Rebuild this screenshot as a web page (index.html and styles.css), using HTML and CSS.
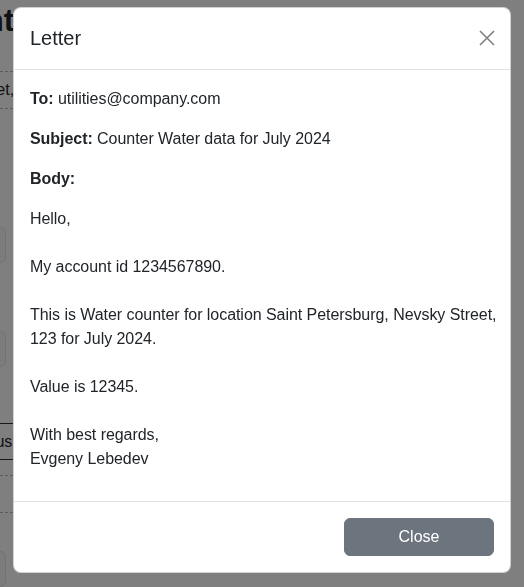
FILE: index.html
```html
<!DOCTYPE html>
<html lang="en">
<head>
<meta charset="utf-8">
<title>Letter</title>
<link rel="stylesheet" href="styles.css">
</head>
<body>
<div class="page">
  <h1 class="page-title">Counters</h1>
  <div class="row-dashed"><span class="cell-text">Street,</span></div>
  <div class="gap-a"></div>
  <div class="ghost-box"></div>
  <div class="gap-b"></div>
  <div class="ghost-box"></div>
  <div class="gap-c"></div>
  <div class="ghost-input"><span class="cell-text">Status</span></div>
  <div class="row-dashed short"></div>
  <div class="gap-d"></div>
  <div class="ghost-box"></div>
</div>

<div class="backdrop"></div>

<div class="modal">
  <div class="modal-dialog">
    <div class="modal-header">
      <h5 class="modal-title">Letter</h5>
      <button class="btn-close" type="button" aria-label="Close">
        <svg width="16" height="16" viewBox="0 0 16 16"><path d="M1 1 L15 15 M15 1 L1 15" stroke="#000" stroke-width="1.6" fill="none"/></svg>
      </button>
    </div>
    <div class="modal-body">
      <p><b>To:</b> utilities@company.com</p>
      <p><b>Subject:</b> Counter Water data for July 2024</p>
      <p><b>Body:</b></p>
      <p class="letter">Hello,

My account id 1234567890.

This is Water counter for location Saint Petersburg, Nevsky Street, 123 for July 2024.

Value is 12345.

With best regards,
Evgeny Lebedev</p>
    </div>
    <div class="modal-footer">
      <button class="btn-secondary" type="button">Close</button>
    </div>
  </div>
</div>
</body>
</html>
```

FILE: styles.css
```css
html, body {
  margin: 0;
  padding: 0;
}
body {
  background: #ffffff;
  color: #212529;
  font-family: "Liberation Sans", Arial, sans-serif;
  font-size: 16px;
  line-height: 1.5;
  width: 524px;
  height: 587px;
  overflow: hidden;
}

/* background page (dimmed by backdrop, only its left strip shows) */
.page {
  width: 13px;
  height: 587px;
  overflow: hidden;
}
.page-title {
  margin: 0 0 0 -78px;
  font-size: 32px;
  font-weight: 700;
  line-height: 32px;
  height: 71px;
  white-space: nowrap;
  position: relative;
  top: 4px;
}
.row-dashed {
  height: 36px;
  border-top: 1px dashed #bbb;
  border-bottom: 1px dashed #bbb;
  display: flex;
  align-items: center;
  white-space: nowrap;
  overflow: hidden;
}
.row-dashed .cell-text {
  margin-left: -33px;
}
.row-dashed.short {
  margin-top: 15px;
}
.gap-a { height: 118px; }
.gap-b { height: 68px; }
.gap-c { height: 56px; }
.gap-d { height: 38px; }
.ghost-box {
  width: 40px;
  height: 34px;
  margin-left: -36px;
  border: 1px solid #dee2e6;
  border-radius: 6px;
  background: #f8f9fa;
}
.ghost-input {
  height: 35px;
  border-top: 1px solid #333;
  border-bottom: 1px solid #333;
  display: flex;
  align-items: center;
  overflow: hidden;
  white-space: nowrap;
}
.ghost-input .cell-text {
  margin-left: -33px;
}

.backdrop {
  position: fixed;
  inset: 0;
  background: rgba(0, 0, 0, 0.5);
}

/* modal */
.modal {
  position: fixed;
  inset: 0;
  padding: 7px 13px;
}
.modal-dialog {
  width: 498px;
  height: 566px;
  box-sizing: border-box;
  background: #fff;
  border: 1px solid rgba(0, 0, 0, 0.175);
  border-radius: 8px;
  display: flex;
  flex-direction: column;
  overflow: hidden;
}
.modal-header {
  display: flex;
  align-items: center;
  padding: 15px 15px 16px 16px;
  border-bottom: 1px solid #dee2e6;
}
.modal-title {
  margin: 0;
  font-size: 20px;
  font-weight: 500;
  line-height: 30px;
  flex: 1;
}
.btn-close {
  border: none;
  background: transparent;
  padding: 0;
  margin: 0;
  width: 16px;
  height: 16px;
  opacity: 0.5;
  display: flex;
  cursor: pointer;
}
.modal-body {
  padding: 17px 6px 0 16px;
  flex: 1;
  letter-spacing: -0.05px;
}
.modal-body p {
  margin: 0 0 16px 0;
}
.modal-body b {
  font-weight: 700;
}
.letter {
  white-space: pre-line;
}
.modal-footer {
  border-top: 1px solid #dee2e6;
  padding: 12px;
  display: flex;
  justify-content: flex-end;
}
.btn-secondary {
  margin: 4px;
  width: 150px;
  height: 38px;
  background: #6c757d;
  color: #fff;
  border: 1px solid #6c757d;
  border-radius: 6px;
  font-family: inherit;
  font-size: 16px;
  line-height: 24px;
  padding: 6px 12px;
}
```
